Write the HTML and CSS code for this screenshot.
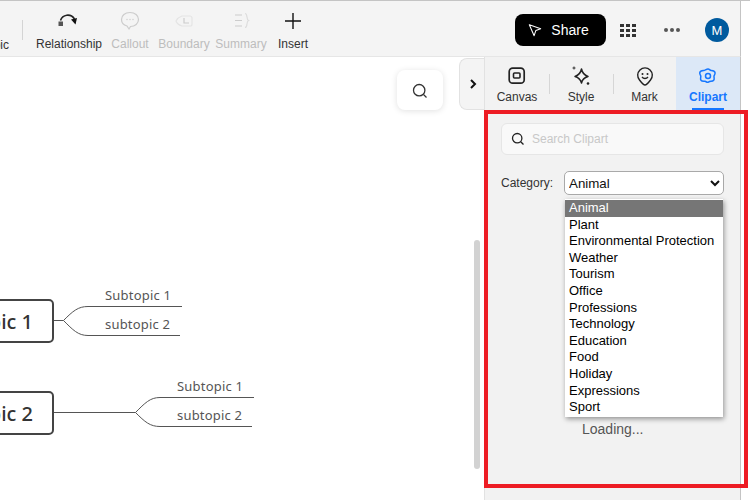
FILE: index.html
```html
<!DOCTYPE html>
<html lang="en">
<head>
<meta charset="utf-8">
<title>Clipart panel</title>
<link rel="stylesheet" href="styles.css">
</head>
<body>
<div class="app">
  <header class="toolbar">
    <div class="tools">
      <span class="clipped-label">Topic</span>
      <span class="tool-divider"></span>
      <div class="tool tool-rel">
        <svg class="tool-icon" viewBox="0 0 24 24" width="24" height="24"><rect x="1.500" y="12.500" width="4.500" height="4.500" fill="#555"/><path d="M3.500 11.500c2-6 10-7.500 14-1.500" fill="none" stroke="#222" stroke-width="1.600"/><path d="M14 10.500l6-1.500-1.500 6.500z" fill="#111"/></svg>
        <span>Relationship</span>
      </div>
      <div class="tool tool-call off">
        <svg class="tool-icon" viewBox="0 0 24 24" width="24" height="24"><path d="M12 3.500c5 0 8.500 3 8.500 7s-3.500 7-8 7l-1.500 2.500-2-3C5.500 16 3.500 13.500 3.500 10.500c0-4 3.500-7 8.500-7z" fill="none" stroke="#ccc" stroke-width="1.200"/><circle cx="9" cy="10.500" r=".7" fill="#ccc"/><circle cx="12" cy="10.500" r=".7" fill="#ccc"/><circle cx="15" cy="10.500" r=".7" fill="#ccc"/></svg>
        <span>Callout</span>
      </div>
      <div class="tool tool-bound off">
        <svg class="tool-icon" viewBox="0 0 24 24" width="24" height="24"><path d="M18 7h-8c-3 1-5 3-6 5 1 3 3 4 6 5h9c1 0 1-1 1-2V9c0-1-1-2-2-2z" fill="none" stroke="#e4e4e4" stroke-width="1.200"/><path d="M12 9v5h5" fill="none" stroke="#ccc" stroke-width="1.200"/></svg>
        <span>Boundary</span>
      </div>
      <div class="tool tool-sum off">
        <svg class="tool-icon" viewBox="0 0 24 24" width="24" height="24"><path d="M6 6h7M6 11.500h7M6 17h7" stroke="#ccc" stroke-width="1.200" fill="none"/><path d="M16 4.500c3 0 1 6 3.500 7-2.500 1-.5 7-3.500 7" stroke="#ddd" stroke-width="1.200" fill="none"/></svg>
        <span>Summary</span>
      </div>
      <div class="tool tool-ins">
        <svg class="tool-icon" viewBox="0 0 24 24" width="24" height="24"><path d="M12 4v16M4 12h16" stroke="#111" stroke-width="1.400" fill="none"/></svg>
        <span>Insert</span>
      </div>
    </div>
    <div class="actions">
      <button class="share" type="button">
        <svg viewBox="0 0 16 16" width="14" height="14"><path d="M1.500 2l13 4.500-5.500 2-2 6z" fill="none" stroke="#fff" stroke-width="1.200" stroke-linejoin="round"/></svg>
        <span>Share</span>
      </button>
      <div class="apps">
        <i></i><i></i><i></i><i></i><i></i><i></i><i></i><i></i><i></i>
      </div>
      <div class="more"><i></i><i></i><i></i></div>
      <div class="avatar">M</div>
    </div>
  </header>

  <main class="workspace">
    <section class="canvas">
      <svg class="links" width="484" height="443" viewBox="0 57 484 443">
        <g fill="none" stroke="#555" stroke-width="1">
          <path d="M53 320.500H63.500C73 311 78 306.500 88 306.500H182"/>
          <path d="M63.500 320.500C73 330 78 335.500 88 335.500H180"/>
          <path d="M53 412.500H135.500C145 403 150 397.500 160 397.500H254"/>
          <path d="M135.500 412.500C145 422 150 426.500 160 426.500H252"/>
        </g>
      </svg>
      <div class="node topic topic-1">Topic 1</div>
      <div class="node topic topic-2">Topic 2</div>
      <div class="node sub s1">Subtopic 1</div>
      <div class="node sub s2">subtopic 2</div>
      <div class="node sub s3">Subtopic 1</div>
      <div class="node sub s4">subtopic 2</div>

      <div class="float-search">
        <svg viewBox="0 0 16 16" width="16" height="16"><circle cx="7.200" cy="7.200" r="5.700" fill="none" stroke="#333" stroke-width="1.300"/><path d="M11.500 11.500l3 3" stroke="#333" stroke-width="1.300"/></svg>
      </div>
      <div class="collapse">
        <svg viewBox="0 0 8 12" width="8" height="12"><path d="M2 2l4 4-4 4" fill="none" stroke="#111" stroke-width="2"/></svg>
      </div>
      <div class="scrollbar"></div>
    </section>

    <aside class="panel">
      <nav class="tabs">
        <div class="tab tab-canvas">
          <svg viewBox="0 0 20 20" width="20" height="20"><rect x="2.200" y="2.200" width="15" height="15" rx="3.500" fill="none" stroke="#222" stroke-width="1.700"/><rect x="6.500" y="7" width="6.500" height="5" rx="1" fill="none" stroke="#222" stroke-width="1.600"/></svg>
          <span>Canvas</span>
        </div>
        <span class="tab-divider"></span>
        <div class="tab tab-style">
          <svg viewBox="0 0 20 20" width="20" height="20"><path d="M10.500 3c.8 4 3 6.300 6.500 7.500-3.500 1-5.700 3-6.500 6.500-1-3.500-3-5.500-6.500-6.500 3.500-1.200 5.700-3.500 6.500-7.500z" fill="none" stroke="#222" stroke-width="1.500" stroke-linejoin="round"/><path d="M3 .5v3M1.500 2h3" stroke="#222" stroke-width=".9"/><circle cx="17" cy="17.500" r="1.300" fill="#222"/></svg>
          <span>Style</span>
        </div>
        <span class="tab-divider"></span>
        <div class="tab tab-mark">
          <svg viewBox="0 0 20 20" width="20" height="20"><path d="M10 19c-1 0-4-3-5.500-5a7.300 7.300 0 1 1 11 0C14 16 11 19 10 19z" fill="none" stroke="#222" stroke-width="1.400" stroke-linejoin="round"/><circle cx="7.500" cy="8" r="1" fill="#222"/><circle cx="12.500" cy="8" r="1" fill="#222"/><path d="M7 11c1.500 2 4.500 2 6 0" fill="none" stroke="#222" stroke-width="1.300"/></svg>
          <span>Mark</span>
        </div>
        <div class="tab active">
          <svg viewBox="0 0 20 20" width="20" height="20"><path d="M10 3c1.500 0 2 1.300 3 1.500 1.500.2 3.500.3 4 2 .4 1.700-.8 2.600-1 3.500-.2 1.300.8 3-.3 4.300-1.200 1.400-3 .7-4.200 1.200-1 .5-1.500 1.200-2.500.7-1-.4-1-.7-2-.9-1.200-.2-3 .4-4-1-1.100-1.300 0-3-.2-4.300-.2-.9-1.400-1.800-1-3.500.5-1.700 2.500-1.800 4-2C7 4.300 8.500 3 10 3z" fill="none" stroke="#1677ff" stroke-width="1.500" stroke-linejoin="round"/><circle cx="10" cy="10" r="2.500" fill="none" stroke="#1677ff" stroke-width="1.500"/></svg>
          <span>Clipart</span>
        </div>
      </nav>
      <div class="panel-body">
        <label class="search">
          <svg viewBox="0 0 14 14" width="14" height="14"><circle cx="6.200" cy="6.200" r="4.700" fill="none" stroke="#222" stroke-width="1.300"/><path d="M9.700 9.700l2.800 2.800" stroke="#222" stroke-width="1.300"/></svg>
          <span>Search Clipart</span>
        </label>
        <div class="category">
          <span class="category-label">Category:</span>
          <div class="select-wrap">
            <select class="select"><option>Animal</option></select>
            <ul class="options">
              <li class="selected">Animal</li>
              <li>Plant</li>
              <li>Environmental Protection</li>
              <li>Weather</li>
              <li>Tourism</li>
              <li>Office</li>
              <li>Professions</li>
              <li>Technology</li>
              <li>Education</li>
              <li>Food</li>
              <li>Holiday</li>
              <li>Expressions</li>
              <li>Sport</li>
            </ul>
          </div>
        </div>
        <div class="loading">Loading...</div>
      </div>
    </aside>
    <div class="outer-gutter"></div>
  </main>
  <div class="highlight"></div>
</div>
</body>
</html>
```

FILE: styles.css
```css
* { box-sizing: border-box; }
html, body { margin: 0; height: 100%; overflow: hidden; background: #fff; }
body { font-family: "Liberation Sans", Arial, sans-serif; color: #333; }

.app { position: relative; width: 750px; height: 500px; border-top: 1px solid #c4c4c4; }

.toolbar {
  width: 741px; height: 56px; display: flex; justify-content: space-between; align-items: stretch;
  background: #f4f4f4; border-right: 1px solid #c4c4c4; border-bottom: 1px solid #e6e6e6;
}
.tools { display: flex; align-items: flex-start; position: relative; width: 320px; }
.clipped-label { position: absolute; right: 311px; top: 37px; font-size: 12px; line-height: 14px; white-space: nowrap; color: #333; }
.tool-divider { width: 1px; height: 20px; background: #d4d4d4; margin: 19px 0 0 22px; flex: none; }
.tool { position: absolute; top: 8px; width: 70px; display: flex; flex-direction: column; align-items: center; font-size: 12px; line-height: 14px; color: #333; }
.tool span { margin-top: 4px; white-space: nowrap; }
.tool-icon { display: block; }
.off { color: #bdbdbd; }
.tool-rel { left: 34px; }
.tool-call { left: 95px; }
.tool-bound { left: 149px; }
.tool-sum { left: 206px; }
.tool-ins { left: 258px; }

.actions { display: flex; align-items: center; padding: 3px 11px 0 0; }
.share {
  width: 91px; height: 32px; border: 0; border-radius: 8px; background: #000; color: #fff;
  display: flex; align-items: center; justify-content: center; gap: 9px; font: 14px "Liberation Sans", Arial, sans-serif; padding: 0 4px 0 0;
}
.apps { display: grid; grid-template-columns: repeat(3, 4px); grid-auto-rows: 3px; gap: 2px; margin-left: 14px; }
.apps i { background: #333; display: block; }
.more { display: flex; gap: 2px; margin-left: 28px; }
.more i { width: 4px; height: 4px; border-radius: 50%; background: #555; display: block; }
.avatar {
  width: 24px; height: 24px; border-radius: 50%; background: #005a9e; color: #fff; margin-left: 25px;
  display: flex; align-items: center; justify-content: center; font-size: 13px;
}

.workspace { display: flex; height: 443px; }
.canvas { position: relative; width: 484px; flex: none; overflow: hidden; background: #fff; }
.links { position: absolute; left: 0; top: 0; }
.node { position: absolute; white-space: nowrap; font-family: "Noto Sans", "Open Sans", sans-serif; color: #555; }
.topic {
  left: -40px; width: 94px; height: 44px; border: 2px solid #444; border-radius: 5px;
  font-size: 20px; line-height: 42px; text-align: right; padding-right: 19px; color: #333; font-weight: 500;
}
.topic-1 { top: 242px; }
.topic-2 { top: 334px; }
.sub { font-size: 13px; line-height: 18px; letter-spacing: .2px; }
.s1 { left: 105px; top: 229px; }
.s2 { left: 105px; top: 258px; }
.s3 { left: 177px; top: 320px; }
.s4 { left: 177px; top: 349px; }

.float-search {
  position: absolute; left: 397px; top: 13px; width: 46px; height: 40px; background: #fff; border-radius: 8px;
  box-shadow: 0 1px 6px rgba(0,0,0,.12); display: flex; align-items: center; justify-content: center; padding-top: 1px;
}
.collapse {
  position: absolute; left: 459px; top: 1px; width: 26px; height: 52px; background: #f4f4f4;
  border: 1px solid #e2e2e2; border-right: 0; border-radius: 8px 0 0 8px; display: flex; align-items: center; justify-content: center;
}
.scrollbar { position: absolute; left: 474px; top: 183px; width: 6px; height: 229px; background: #d2d2d2; border-radius: 3px; }

.panel { width: 257px; flex: none; background: #f2f2f2; border-left: 1px solid #e2e2e2; border-right: 1px solid #c4c4c4; display: flex; flex-direction: column; }
.tabs { display: flex; height: 53px; align-items: center; }
.tab {
  width: 63px; height: 53px; display: flex; flex-direction: column; align-items: center; padding-top: 9px; gap: 4px;
  font-size: 12px; line-height: 14px; color: #333; flex: none;
}
.tab svg { display: block; }
.tab-canvas { width: 64px; }
.tab-style { width: 62px; margin-right: 1px; }
.tab-mark { width: 61px; margin-right: 1px; }
.tab-divider { width: 1px; height: 20px; background: #d6d6d6; flex: none; }
.tab.active { position: relative; width: 64px; background: #dce8f7; color: #1677ff; font-weight: 700; }
.tab.active::after { content: ""; position: absolute; left: 16px; right: 16px; bottom: 0; height: 2px; background: #1677ff; }

.panel-body { padding: 13px 16px 0 16px; display: flex; flex-direction: column; }
.search {
  height: 32px; border: 1px solid #e6e6e6; border-radius: 6px; background: #f9f9f9; display: flex; align-items: center; gap: 7px; padding-left: 9px;
  font-size: 12px; color: #c8c8c8;
}
.category { display: flex; margin-top: 16px; align-items: flex-start; }
.category-label { width: 63px; font-size: 12px; line-height: 24px; color: #333; flex: none; }
.select-wrap { position: relative; width: 160px; }
.select {
  display: block; width: 160px; height: 24px; border: 1px solid #a9a9a9; border-radius: 5px; background: #fff;
  font: 13.330px "Liberation Sans", Arial, sans-serif; color: #111; padding: 0; margin: 0;
}
.options {
  position: absolute; left: 1px; top: 28px; width: 158px; height: 218px; margin: 0; padding: 1px 0 0; list-style: none; background: #fff;
  box-shadow: 1px 2px 5px rgba(0,0,0,.4); font-size: 13px; line-height: 16.600px; color: #000; z-index: 2;
}
.options li { padding-left: 4px; white-space: nowrap; }
.options .selected { background: #767676; color: #fff; }
.loading { margin: 226px 0 0 81px; font-size: 14px; line-height: 16px; color: #555; }

.outer-gutter { flex: 1; background: #fff; }
.highlight { position: absolute; left: 484px; top: 109px; width: 264px; height: 378px; border: 4px solid #ed1c24; z-index: 5; pointer-events: none; }
```
